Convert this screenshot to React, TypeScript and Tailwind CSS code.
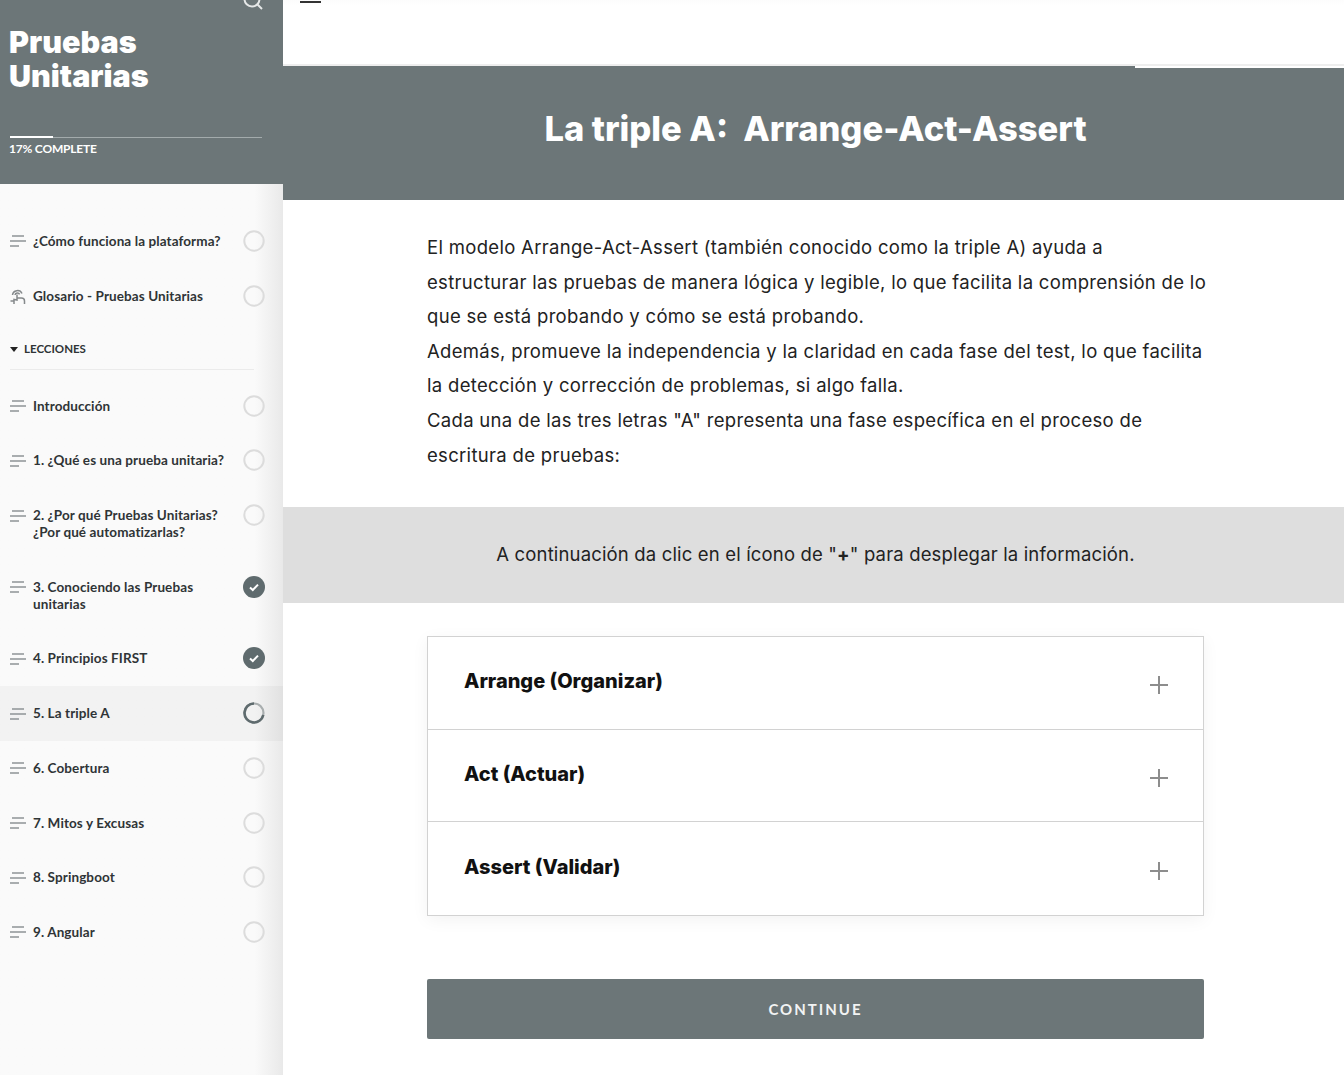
const lessons: { title: string; lines?: string[]; status: "open" | "done" | "active" }[] = [
  { title: "Introducción", status: "open" },
  { title: "1. ¿Qué es una prueba unitaria?", status: "open" },
  { title: "2. ¿Por qué Pruebas Unitarias?", lines: ["¿Por qué automatizarlas?"], status: "open" },
  { title: "3. Conociendo las Pruebas", lines: ["unitarias"], status: "done" },
  { title: "4. Principios FIRST", status: "done" },
  { title: "5. La triple A", status: "active" },
  { title: "6. Cobertura", status: "open" },
  { title: "7. Mitos y Excusas", status: "open" },
  { title: "8. Springboot", status: "open" },
  { title: "9. Angular", status: "open" },
];

const accordion = ["Arrange (Organizar)", "Act (Actuar)", "Assert (Validar)"];

const LinesIcon = () => (
  <svg width="16" height="12" viewBox="0 0 16 12" className="shrink-0" fill="none" stroke="#8f9496" strokeWidth="1.3">
    <path d="M2 1h12M0 6h16M0 11h9" />
  </svg>
);

const TouchIcon = () => (
  <svg width="16" height="17" viewBox="0 0 16 17" className="shrink-0" fill="none" stroke="#85898b" strokeWidth="1.5">
    <path d="M2.5 7a5 5 0 0 1 9.5-1.5" />
    <path d="M5 7a2.4 2.4 0 0 1 4.6-.6" />
    <path d="M7 6.5v5.5l-3-.5v4.5M7 10h4.500a3 3 0 0 1 3 3v3" />
    <path d="M0.500 13h3.500" />
  </svg>
);

const StatusIcon = ({ status }: { status: "open" | "done" | "active" }) => {
  if (status === "done") {
    return (
      <svg width="22" height="22" viewBox="0 0 22 22" className="shrink-0">
        <circle cx="11" cy="11" r="11" fill="#5f6b6e" />
        <path d="M7 11.500l2.800 2.500L15 8.600" fill="none" stroke="#fff" strokeWidth="2" />
      </svg>
    );
  }
  if (status === "active") {
    return (
      <svg width="22" height="22" viewBox="0 0 22 22" className="shrink-0" fill="none">
        <circle cx="11" cy="11" r="9.500" stroke="#a9aeaf" strokeWidth="2.200" />
        <path d="M11 1.500A9.500 9.500 0 1 0 20.300 13" stroke="#5f6b6e" strokeWidth="2.600" />
      </svg>
    );
  }
  return (
    <svg width="22" height="22" viewBox="0 0 22 22" className="shrink-0" fill="none">
      <circle cx="11" cy="11" r="9.700" stroke="#dcdcdc" strokeWidth="2" />
    </svg>
  );
};

const Row = ({
  title,
  lines,
  status,
  icon,
}: {
  title: string;
  lines?: string[];
  status: "open" | "done" | "active";
  icon?: React.ReactNode;
}) => (
  <div className={`flex items-start gap-[7px] py-[18.85px] pl-[10px] pr-[18px] ${status === "active" ? "bg-black/[0.03]" : ""}`}>
    <div className="flex h-[17px] items-center">{icon ?? <LinesIcon />}</div>
    <div className="flex-1 text-[13.5px] leading-[17px] font-bold tracking-[0.1px] text-[#2f3436]">
      <p>{title}</p>
      {lines?.map((line) => <p key={line}>{line}</p>)}
    </div>
    <div className="-my-[3px] h-[22px]">
      <StatusIcon status={status} />
    </div>
  </div>
);

export default function App() {
  return (
    <div className="flex h-[1075px] w-[1344px] overflow-hidden bg-white font-['Lato',sans-serif]">
      <aside className="relative flex w-[283px] shrink-0 flex-col bg-[#fafafa]">
        <div className="relative h-[184px] bg-[#6c7678] pt-[25px] pr-[10px] pl-[9px] text-white">
          <svg width="20" height="20" viewBox="0 0 20 20" className="absolute right-[20px] -top-[10px]" fill="none" stroke="#e6e8e8" strokeWidth="2">
            <circle cx="9" cy="9" r="7.500" />
            <path d="M14.500 14.500L19 19" />
          </svg>
          <h1 className="font-['Inter',sans-serif] text-[30.5px] leading-[34px] font-black">
            Pruebas
            <br />
            Unitarias
          </h1>
          <div className="mt-[44px] mr-[11px] ml-[1px] h-[1px] bg-[#a3abac]">
            <div className="h-[2px] w-[43px] -translate-y-[1px] bg-white" />
          </div>
          <p className="mt-[3px] text-[12px] leading-[16px] font-bold tracking-[-0.2px]">17% COMPLETE</p>
        </div>
        <div className="flex-1 bg-gradient-to-r from-[#fafafa] from-[90%] to-[#e9e9e9] pt-[30px]">
          <Row title="¿Cómo funciona la plataforma?" status="open" />
          <Row title="Glosario - Pruebas Unitarias" status="open" icon={<TouchIcon />} />
          <div className="mr-[29px] mb-[8.500px] ml-[10px] border-b border-[#ebebeb] pt-[18px] pb-[12px]">
            <p className="flex items-center gap-[6px] text-[11.5px] leading-[16px] font-bold text-[#2f3436]">
              <span className="mt-[1px] h-0 w-0 border-x-[4px] border-t-[5px] border-x-transparent border-t-[#222]" />
              LECCIONES
            </p>
          </div>
          {lessons.map((lesson) => (
            <Row key={lesson.title} {...lesson} />
          ))}
        </div>
      </aside>

      <main className="flex min-w-0 flex-1 flex-col font-['Inter',sans-serif]">
        <div className="h-[66px] shrink-0 border-b-2 border-[#eeeeee] bg-gradient-to-b from-[#fcfcfc] to-white to-[8%] pt-[1px] pl-[17px]">
          <div className="h-[2px] w-[21px] bg-[#333]" />
        </div>
        <div className="flex h-[2px] shrink-0">
          <div className="flex-1 bg-[#6c7678]" />
          <div className="w-[209px] bg-white" />
        </div>
        <div className="flex h-[132px] shrink-0 items-center justify-center bg-[#6c7678] pb-[10px] pl-[4px]">
          <h2 className="text-[34.5px] leading-[44px] font-extrabold whitespace-pre text-white">La triple A:  Arrange-Act-Assert</h2>
        </div>

        <div className="mr-[136px] ml-[144px] pt-[30px] text-[18.5px] leading-[34.6px] tracking-[0.31px] text-[#222]">
          <p>
            El modelo Arrange-Act-Assert (también conocido como la triple A) ayuda a
            <br />
            estructurar las pruebas de manera lógica y legible, lo que facilita la comprensión de lo que se está probando y cómo se está probando.
          </p>
          <p>
            Además, promueve la independencia y la claridad en cada fase del test, lo que facilita la detección y corrección de problemas, si algo falla.
          </p>
          <p>
            Cada una de las tres letras "A" representa una fase específica en el proceso de escritura de pruebas:
          </p>
        </div>

        <div className="mt-[35px] flex h-[96px] shrink-0 items-center justify-center bg-[#dedede] pl-[4px] text-[18.5px] tracking-[0.16px] text-[#222]">
          <p>
            A continuación da clic en el ícono de "<b>+</b>" para desplegar la información.
          </p>
        </div>

        <div className="mt-[33px] mr-[140px] ml-[144px] border border-[#d2d2d2] bg-white shadow-[0_4px_16px_rgba(0,0,0,0.05)]">
          {accordion.map((item) => (
            <div key={item} className="flex h-[92.600px] items-center justify-between border-b border-[#d2d2d2] pr-[35px] pl-[36px] last:border-b-0">
              <span className="-mt-[4px] text-[20px] font-extrabold text-[#111]">{item}</span>
              <svg width="18" height="18" viewBox="0 0 18 18" fill="none" stroke="#8d8d8d" strokeWidth="2" className="mt-[4px]">
                <path d="M9 0v18M0 9h18" />
              </svg>
            </div>
          ))}
        </div>

        <button className="mt-[63px] mr-[140px] ml-[144px] h-[60px] shrink-0 rounded-[2px] bg-[#6c7678] font-['Lato',sans-serif] text-[15px] font-bold tracking-[2px] text-[#f2f3f3]">
          CONTINUE
        </button>
      </main>
    </div>
  );
}
